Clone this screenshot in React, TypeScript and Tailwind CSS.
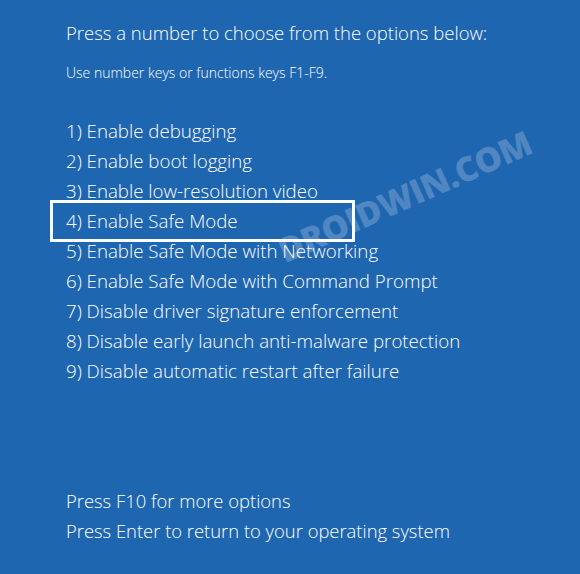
const options = [
  '1) Enable debugging',
  '2) Enable boot logging',
  '3) Enable low-resolution video',
  '4) Enable Safe Mode',
  '5) Enable Safe Mode with Networking',
  '6) Enable Safe Mode with Command Prompt',
  '7) Disable driver signature enforcement',
  '8) Disable early launch anti-malware protection',
  '9) Disable automatic restart after failure',
]

export default function App() {
  return (
    <div
      className="relative w-[580px] h-[574px] overflow-hidden bg-[#1f66b1] text-white pl-[66px] pt-[18px] font-light"
      style={{ fontFamily: '"Open Sans", "Noto Sans", sans-serif' }}
    >
      {/* Watermark */}
      <div className="absolute left-[268px] top-[171px] -rotate-[24deg] origin-center text-[34px] font-extrabold tracking-[-0.5px] text-white/[0.22] select-none pointer-events-none">
        DROIDWIN.COM
      </div>

      <div className="text-[18.5px] leading-[30px]">Press a number to choose from the options below:</div>
      <div className="mt-[15px] text-[14px] leading-[20px]">Use number keys or functions keys F1-F9.</div>

      <div className="mt-[33px] flex flex-col">
        {options.map((o, i) =>
          i === 3 ? (
            <div
              key={o}
              className="-ml-[16px] -my-[6px] w-[305px] border-[3px] border-white px-[13px] py-[3px] text-[18.7px] leading-[30px]"
            >
              {o}
            </div>
          ) : (
            <div key={o} className="text-[18.7px] leading-[30px]">
              {o}
            </div>
          )
        )}
      </div>

      <div className="mt-[100px] flex flex-col text-[18.4px] leading-[30px]">
        <div>Press F10 for more options</div>
        <div>Press Enter to return to your operating system</div>
      </div>
    </div>
  )
}
